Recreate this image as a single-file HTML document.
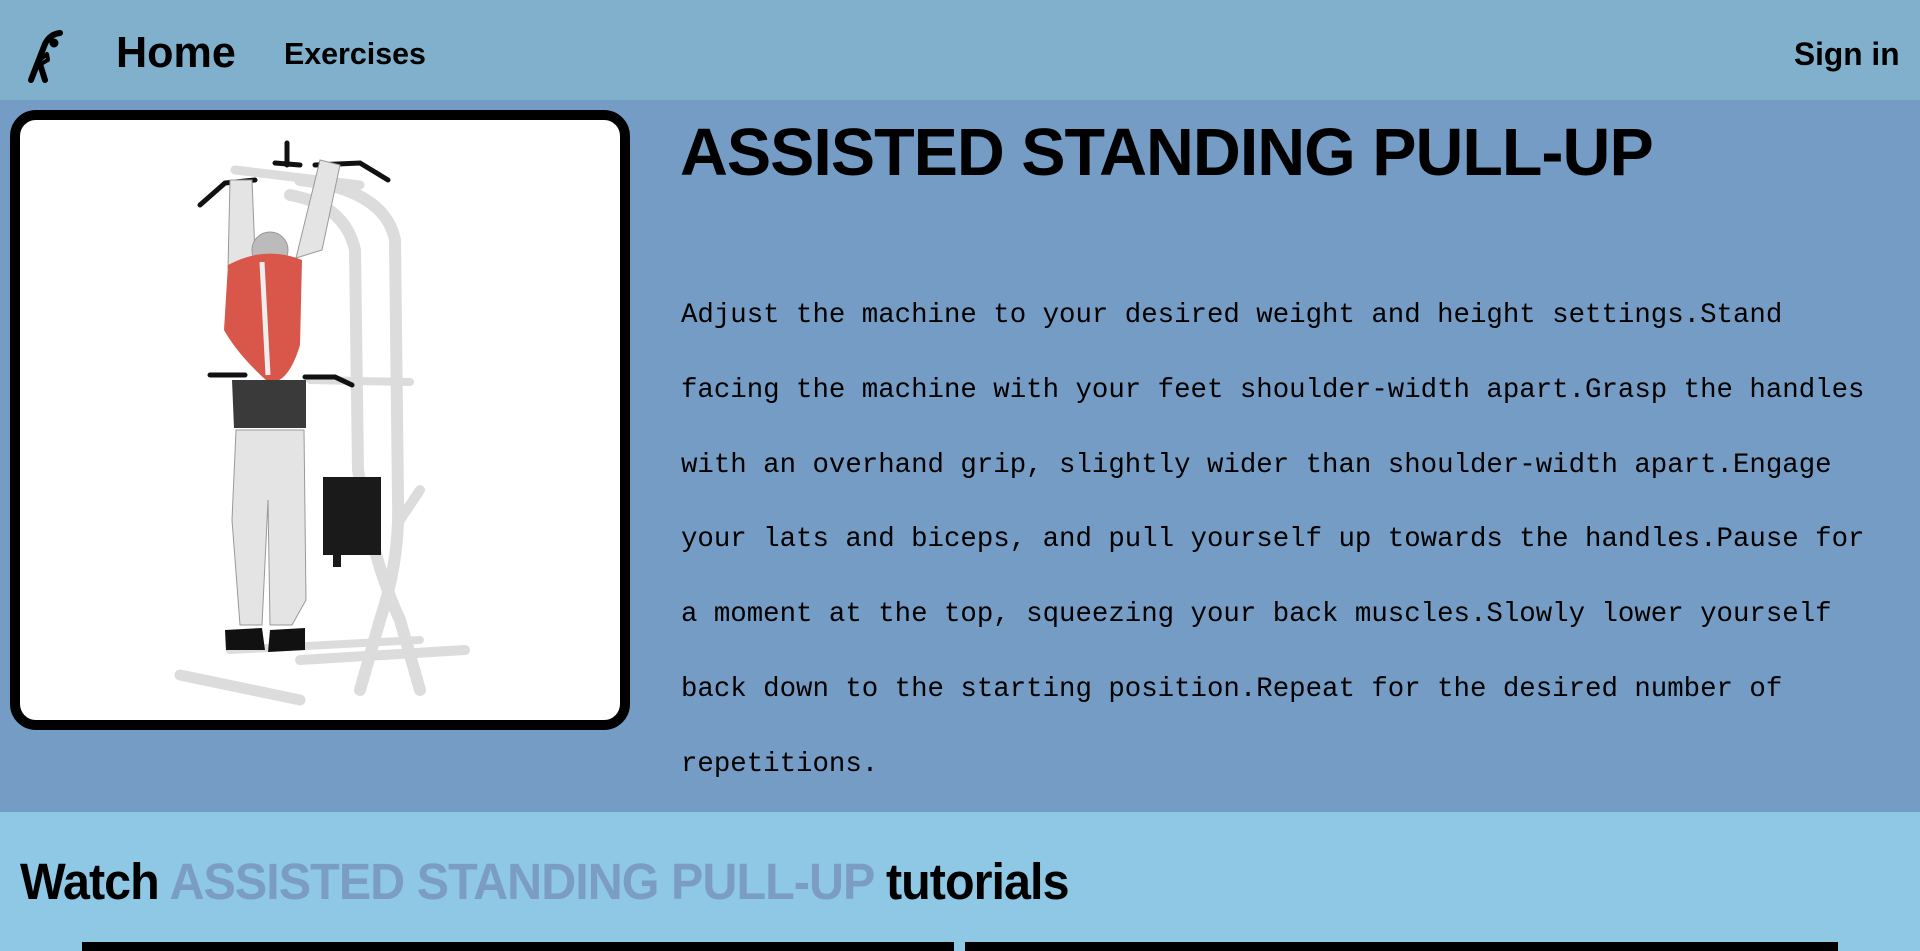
<!DOCTYPE html>
<html><head><meta charset="utf-8"><style>
*{margin:0;padding:0;box-sizing:border-box}
body{width:1920px;height:951px;overflow:hidden;background:#8fc8e4;font-family:"Liberation Sans",sans-serif;position:relative}
nav{position:absolute;left:0;top:0;width:1920px;height:100px;background:#80b0cc}
.n{position:absolute;font-weight:bold;color:#000;white-space:nowrap;transform-origin:left center}
main{position:absolute;left:0;top:100px;width:1920px;height:712px;background:#749cc4}
.card{position:absolute;left:10px;top:10px;width:620px;height:620px;border:10px solid #000;border-radius:26px;background:#fff;overflow:hidden}
h1{position:absolute;left:680px;top:113px;font-size:67px;line-height:80px;font-weight:bold;white-space:nowrap;transform:scaleX(0.99);transform-origin:left top;letter-spacing:-1px}
p{position:absolute;left:681px;top:279px;width:1215px;font-family:"Liberation Mono",monospace;font-size:27.4px;line-height:74.8px;color:#000}
h2{position:absolute;left:20px;top:852px;font-size:51px;line-height:60px;font-weight:bold;white-space:nowrap;transform:scaleX(0.95);transform-origin:left top;letter-spacing:-1px}
h2 span{color:#7b9dc4}
.bar{position:absolute;top:942px;height:9px;background:#000}
</style></head><body>
<nav>
<svg style="position:absolute;left:20px;top:25px" width="50" height="60" viewBox="20 25 50 60">
<circle cx="54" cy="43" r="4.5" fill="#000"/>
<path d="M31 80 L45 44 Q50 34 60 33" stroke="#000" stroke-width="6" fill="none" stroke-linecap="round"/>
<path d="M40 60 L47 54 L48 60 L41 64" stroke="#000" stroke-width="4" fill="none" stroke-linejoin="round"/>
<path d="M40 64 L45 80" stroke="#000" stroke-width="6" stroke-linecap="round"/>
</svg>
<div class="n" style="left:116px;top:28px;font-size:44px;line-height:50px;transform:scaleX(0.98)">Home</div>
<div class="n" style="left:284px;top:36px;font-size:31px;line-height:36px;transform:scaleX(0.98)">Exercises</div>
<div class="n" style="left:1794px;top:36px;font-size:32px;line-height:36px;transform:scaleX(0.99)">Sign in</div>
</nav>
<main>
<div class="card">
<svg width="600" height="600" viewBox="20 120 600 600" style="position:absolute;left:0;top:0">
<g fill="none" stroke="#dcdcdc" stroke-linecap="round">
<path d="M300 180 Q385 190 395 240 L398 500 Q400 560 380 620 L360 690" stroke-width="12"/>
<path d="M290 195 Q345 205 355 250 L358 470 Q372 560 400 620 L420 690" stroke-width="12"/>
<path d="M235 170 L360 185" stroke-width="9"/>
<path d="M310 380 L410 382" stroke-width="8"/>
<path d="M180 675 L300 700" stroke-width="11"/>
<path d="M300 660 L465 650" stroke-width="10"/>
<path d="M230 650 L420 640" stroke-width="8"/>
<path d="M400 520 L420 490" stroke-width="10"/>
</g>
<g stroke="#111" stroke-width="5" fill="none" stroke-linecap="round">
<path d="M200 205 L225 183 L255 180"/>
<path d="M315 165 L360 163 L388 180"/>
<path d="M287 143 L287 165"/>
<path d="M275 163 L300 165"/>
<path d="M210 375 L245 375"/>
<path d="M305 377 L335 377 L352 385"/>
</g>
<rect x="323" y="477" width="58" height="78" fill="#1a1a1a"/>
<rect x="333" y="555" width="8" height="12" fill="#1a1a1a"/>
<g fill="#e4e4e4" stroke="#999" stroke-width="1">
<path d="M230 180 L252 180 L255 255 L228 268 Z"/>
<path d="M320 160 L340 165 L322 250 L296 258 Z"/>
<circle cx="270" cy="250" r="18" fill="#bbb"/>
<path d="M236 430 L304 430 L306 600 L292 625 L270 625 L268 500 L262 625 L240 625 L232 520 Z"/>
</g>
<path d="M228 265 Q265 245 302 260 L300 345 Q288 385 268 382 Q238 355 224 330 Z" fill="#d8564a"/>
<path d="M262 262 L268 375" stroke="#eee" stroke-width="5"/>
<path d="M232 380 L306 380 L306 428 L234 428 Z" fill="#3a3a3a"/>
<path d="M225 630 L262 628 L265 650 L226 650 Z M270 630 L305 628 L305 650 L268 652 Z" fill="#111"/>
</svg>
</div>
</main>
<h1>ASSISTED STANDING PULL-UP</h1>
<p>Adjust the machine to your desired weight and height settings.Stand facing the machine with your feet shoulder-width apart.Grasp the handles with an overhand grip, slightly wider than shoulder-width apart.Engage your lats and biceps, and pull yourself up towards the handles.Pause for a moment at the top, squeezing your back muscles.Slowly lower yourself back down to the starting position.Repeat for the desired number of repetitions.</p>
<h2>Watch <span>ASSISTED STANDING PULL-UP</span> tutorials</h2>
<div class="bar" style="left:82px;width:872px"></div>
<div class="bar" style="left:965px;width:873px"></div>
</body></html>
